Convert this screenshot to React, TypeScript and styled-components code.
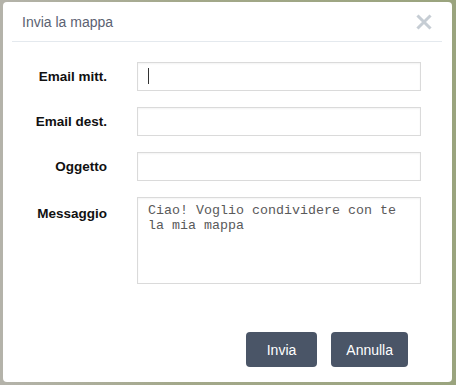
import React from 'react';
import styled, { createGlobalStyle } from 'styled-components';

const GlobalStyle = createGlobalStyle`
    html, body {
        margin: 0;
        padding: 0;
    }
    body {
        width: 456px;
        height: 385px;
        overflow: hidden;
        font-family: "Liberation Sans", Arial, sans-serif;
    }
`;

const Backdrop = styled.div`
    width: 456px;
    height: 385px;
    box-sizing: border-box;
    padding: 2px 4px 3px 3px;
    background: linear-gradient(90deg, #b4b3aa 0px, #b4b3aa 3px, #a3a88a 40%, #9aa47e 100%);
`;

const Dialog = styled.div`
    background: #ffffff;
    border-radius: 4px;
    height: 100%;
    display: flex;
    flex-direction: column;
`;

const Header = styled.div`
    display: flex;
    align-items: center;
    justify-content: space-between;
    height: 39px;
    margin: 0 10px 0 9px;
    padding: 0 10px 0 10px;
    border-bottom: 1px solid #e4e9ee;
`;

const Title = styled.h3`
    margin: 0;
    font-size: 14px;
    font-weight: normal;
    color: #5b6272;
`;

const CloseButton = styled.button`
    border: none;
    background: none;
    padding: 0;
    width: 16px;
    height: 16px;
    display: flex;
    cursor: pointer;
`;

const Form = styled.form`
    display: grid;
    grid-template-columns: 104px 284px;
    column-gap: 30px;
    row-gap: 16px;
    padding: 20px 31px 0 0;
`;

const Label = styled.label<{ $top?: number }>`
    font-size: 13.5px;
    font-weight: bold;
    color: #111;
    text-align: right;
    line-height: 29px;
    padding-top: ${({ $top }) => $top ?? 0}px;
`;

const Field = styled.div`
    position: relative;
`;

const Caret = styled.span`
    position: absolute;
    left: 11px;
    top: 6px;
    width: 1px;
    height: 16px;
    background: #333;
`;

const Input = styled.input`
    box-sizing: border-box;
    height: 29px;
    width: 100%;
    border: 1px solid #dadada;
    box-shadow: inset 0 1px 2px rgba(0, 0, 0, 0.05);
    padding: 0 10px;
    font-size: 13px;
    font-family: "Liberation Sans", Arial, sans-serif;
    color: #333;
    caret-color: transparent;
    outline: none;
`;

const TextArea = styled.textarea`
    box-sizing: border-box;
    height: 87px;
    width: 100%;
    border: 1px solid #dadada;
    box-shadow: inset 0 1px 2px rgba(0, 0, 0, 0.05);
    padding: 5px 10px;
    font-family: "Liberation Mono", "Courier New", monospace;
    font-size: 13.33px;
    line-height: 15px;
    color: #5a5a5a;
    resize: none;
    outline: none;
`;

const Footer = styled.div`
    display: flex;
    justify-content: flex-end;
    gap: 14px;
    margin-top: auto;
    padding: 0 44px 15px 0;
`;

const Button = styled.button<{ $wide?: boolean }>`
    height: 35px;
    padding: 0 ${({ $wide }) => ($wide ? 15 : 21)}px;
    border: none;
    border-radius: 4px;
    background: #4a5567;
    color: #ffffff;
    font-family: "Liberation Sans", Arial, sans-serif;
    font-size: 14px;
    cursor: pointer;
`;

const fields = [
    { id: 'mitt', label: 'Email mitt.' },
    { id: 'dest', label: 'Email dest.' },
    { id: 'ogg', label: 'Oggetto' },
];

const App = () => {
    return (
        <>
            <GlobalStyle />
            <Backdrop>
                <Dialog>
                    <Header>
                        <Title>Invia la mappa</Title>
                        <CloseButton aria-label="Chiudi">
                            <svg width="16" height="16" viewBox="0 0 16 16">
                                <path
                                    d="M2.5 2.5 L13.5 13.5 M13.5 2.5 L2.5 13.5"
                                    stroke="#c6cdd4"
                                    strokeWidth="3"
                                    strokeLinecap="square"
                                />
                            </svg>
                        </CloseButton>
                    </Header>
                    <Form onSubmit={(e) => e.preventDefault()}>
                        {fields.map((f, i) => (
                            <React.Fragment key={f.id}>
                                <Label htmlFor={f.id}>{f.label}</Label>
                                <Field>
                                    <Input id={f.id} type="text" />
                                    {i === 0 && <Caret />}
                                </Field>
                            </React.Fragment>
                        ))}
                        <Label htmlFor="msg" $top={2}>
                            Messaggio
                        </Label>
                        <TextArea
                            id="msg"
                            defaultValue="Ciao! Voglio condividere con te la mia mappa"
                        />
                    </Form>
                    <Footer>
                        <Button>Invia</Button>
                        <Button $wide>Annulla</Button>
                    </Footer>
                </Dialog>
            </Backdrop>
        </>
    );
};

export default App;
